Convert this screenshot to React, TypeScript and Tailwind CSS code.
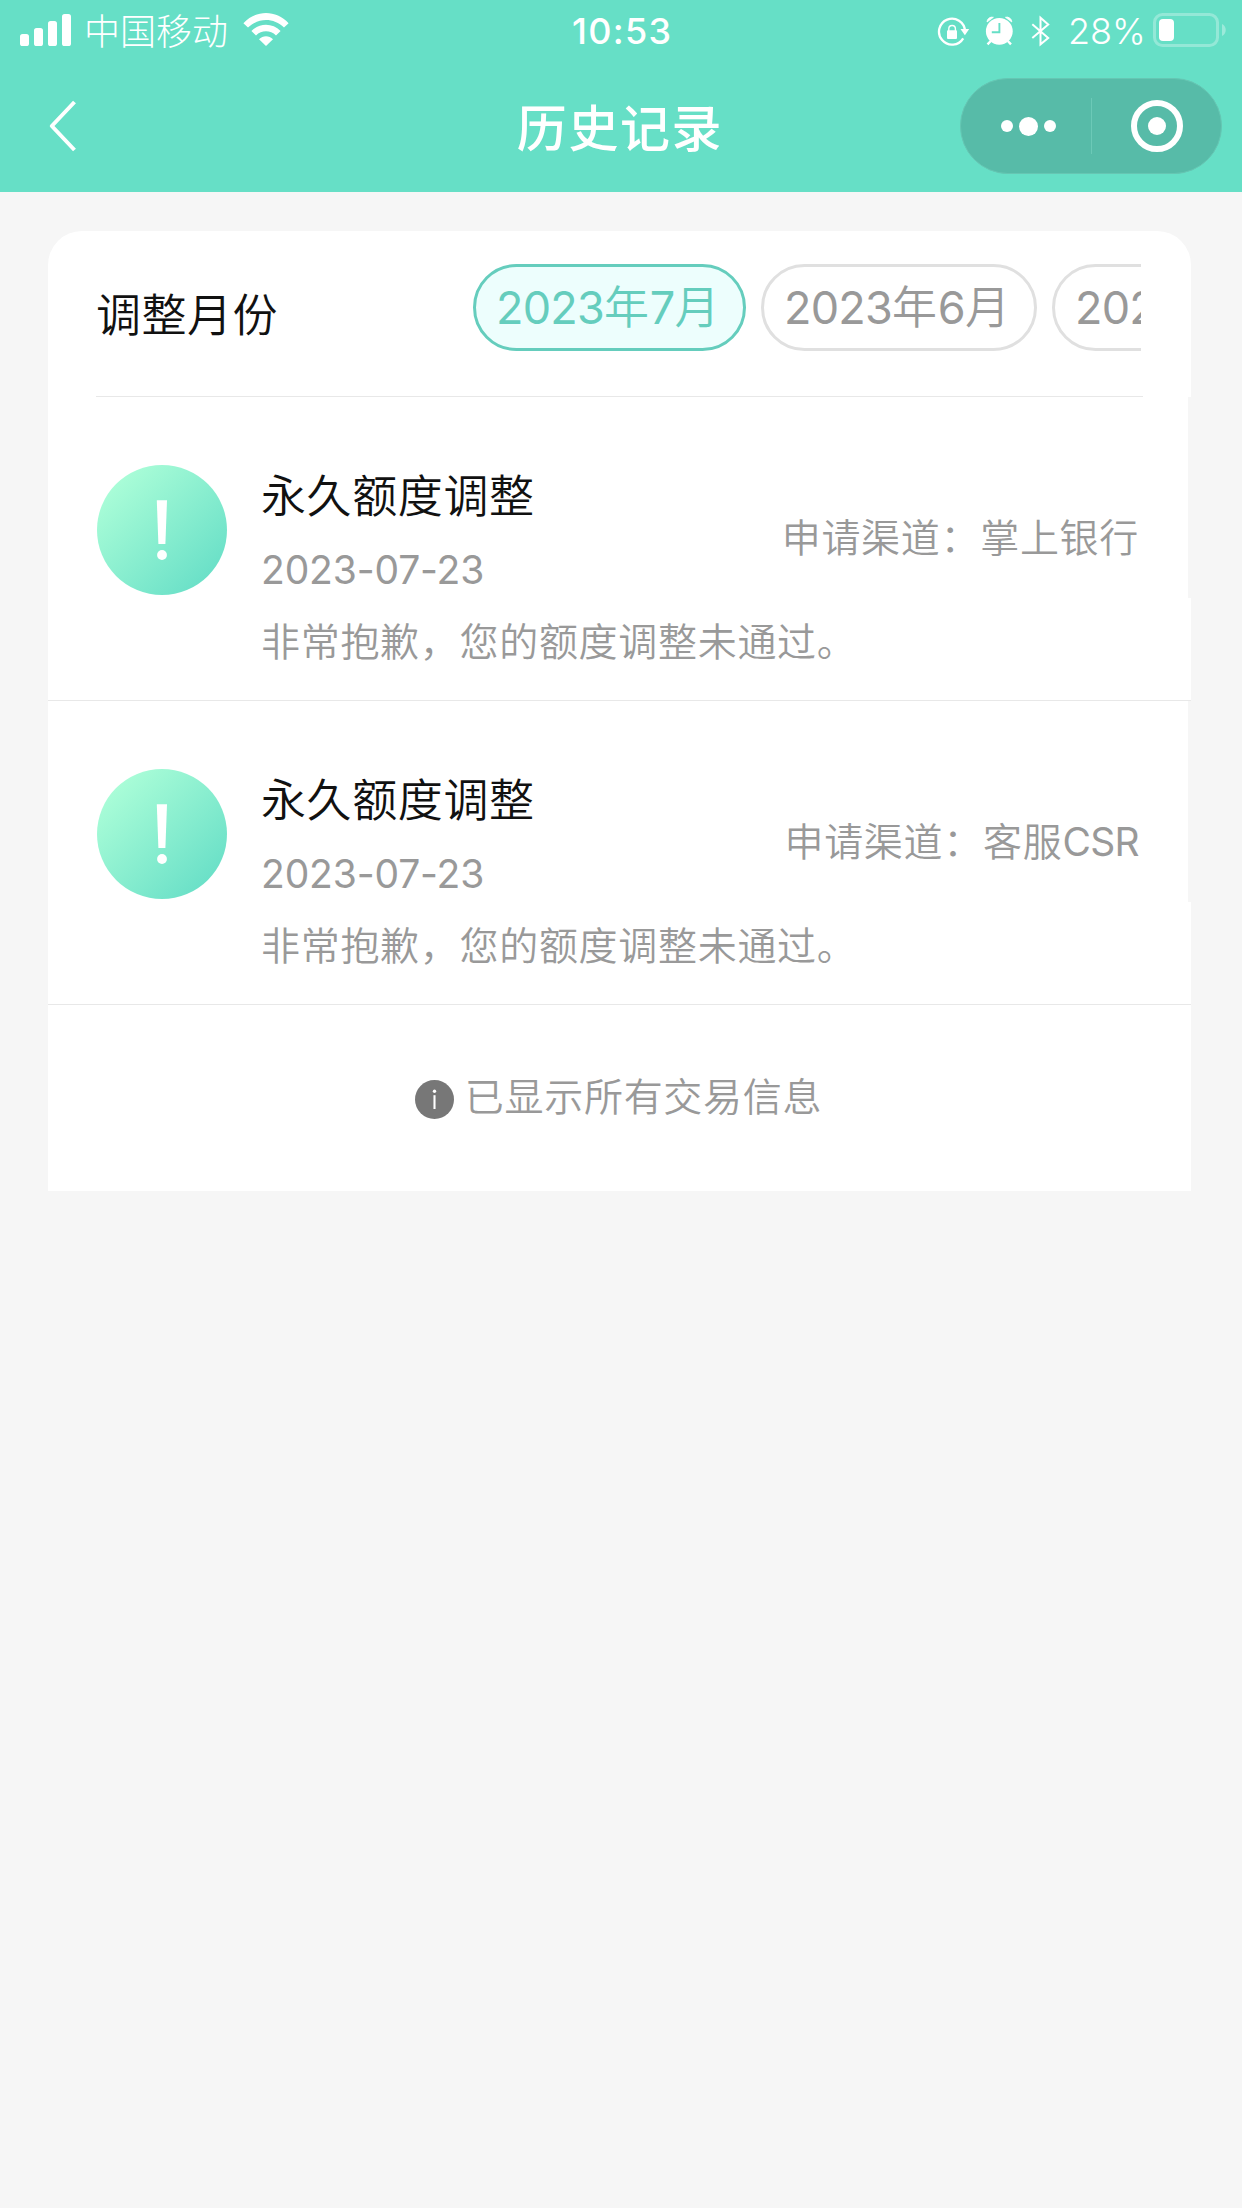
import React from "react";

const records = [
  { title: "永久额度调整", date: "2023-07-23", channel: "申请渠道：掌上银行", message: "非常抱歉，您的额度调整未通过。" },
  { title: "永久额度调整", date: "2023-07-23", channel: "申请渠道：客服CSR", message: "非常抱歉，您的额度调整未通过。" },
];

const months = ["2023年7月", "2023年6月", "2023年5月"];

/** Sets Latin letters and digits tighter than the Chinese text around them. */
function Mixed({ text }: { text: string }) {
  return (
    <>
      {text.split(/([0-9A-Z]+)/).map((run, i) =>
        i % 2 ? (
          <span key={i} className="font-normal tracking-[-0.017em]">
            {run}
          </span>
        ) : (
          run
        ),
      )}
    </>
  );
}

function Signal() {
  return (
    <svg className="ml-5 mt-3.5 h-8 w-[51px] shrink-0" viewBox="0 0 51 32" fill="#fff">
      <rect x="0" y="20" width="9" height="12" rx="2.6" />
      <rect x="14" y="14" width="9" height="18" rx="2.6" />
      <rect x="28" y="7" width="9" height="25" rx="2.6" />
      <rect x="42" y="0" width="9" height="32" rx="2.6" />
    </svg>
  );
}

function Wifi() {
  return (
    <svg className="ml-[15px] mt-[13px] h-[33px] w-[46px] shrink-0" viewBox="0 0 46 33" fill="#fff">
      <path d="M0.4 10.2 C13 -3.3 33 -3.3 45.6 10.2 L41 14.6 C31 4.6 15 4.6 5 14.6 Z" />
      <path d="M8.4 18 C16.5 9.8 29.5 9.8 37.6 18 L33 22.4 C27.5 17 18.5 17 13 22.4 Z" />
      <path d="M16 26.2 C20 22.3 26 22.3 30 26.2 L23 33 Z" />
    </svg>
  );
}

function StatusIcons() {
  return (
    <svg className="mt-[15px] h-8 w-[114px] shrink-0" viewBox="937 15 114 32">
      <g fill="none" stroke="#fff" strokeWidth="2.3">
        <path d="M963.2 38.3 A13 13 0 1 1 965 31" />
        <path d="M948.8 31 V28.8 A3.3 3.3 0 0 1 955.4 28.8 V31" strokeWidth="1.4" />
      </g>
      <rect x="947" y="30.2" width="10" height="8.8" rx="1" fill="#fff" />
      <path d="M960.5 29 H969.2 L964.9 35.2 Z" fill="#fff" />
      <circle cx="999.3" cy="31.3" r="13.4" fill="#fff" />
      <path d="M987 22 A5 5 0 0 1 993.4 17.3 Z M1011.8 22 A5 5 0 0 0 1005.4 17.3 Z" fill="#fff" stroke="#fff" strokeWidth="0.8" strokeLinejoin="round" />
      <path d="M990.8 41 L987.5 44.3 M1007.8 41 L1011 44.3" stroke="#fff" strokeWidth="2.4" />
      <path d="M999.4 23 V32.3 H991.8" fill="none" stroke="#66dfc6" strokeWidth="1.9" />
      <path d="M1032.3 24.3 L1048.2 38 L1040.5 44.3 V17.8 L1048.2 24.6 L1032.3 38" fill="none" stroke="#fff" strokeWidth="2" strokeLinejoin="miter" />
    </svg>
  );
}

function Battery() {
  return (
    <svg className="mt-[13px] h-[34px] w-[74px] shrink-0" viewBox="0 0 74 34">
      <rect x="1.5" y="1.5" width="63" height="31" rx="8" fill="none" stroke="#fff" strokeOpacity=".3" strokeWidth="3" />
      <path d="M69 11 C74 13 74 21 69 23 Z" fill="#fff" fillOpacity=".35" />
      <rect x="6" y="6" width="15" height="22" rx="4" fill="#fff" />
    </svg>
  );
}

function Header() {
  return (
    <header className="h-48 bg-[#66dfc6] text-white">
      <div className="grid h-[62px] grid-cols-[572px_101px_1fr]">
        <div className="flex">
          <Signal />
          <span className="ml-[13px] text-[36px] font-light leading-[65px]">中国移动</span>
          <Wifi />
        </div>
        <span className="text-[36px] font-medium leading-[63px] tracking-[1.3px]">10:53</span>
        <div className="flex justify-end pr-[15px]">
          <StatusIcons />
          <span className="ml-[17px] w-[85px] whitespace-nowrap text-[36px] font-light leading-[63px]">28%</span>
          <Battery />
        </div>
      </div>
      <div className="grid h-[130px] grid-cols-[420px_400px_1fr]">
        <svg className="ml-12 mt-[38px] h-[52px] w-7" viewBox="0 0 28 52" fill="none" stroke="#fff" strokeWidth="4">
          <path d="M26.5 2 L3.8 26 L26.5 50" strokeLinejoin="round" />
        </svg>
        <h1 className="whitespace-nowrap text-center text-[50px] font-medium leading-[134px] tracking-[1.6px]">历史记录</h1>
        <div className="ml-[140px] mt-4 flex h-[96px] w-[262px] items-center rounded-full border border-[#66c6b3] bg-[#57bba8]">
          <div className="flex w-[130px] items-center justify-center gap-[6px] pl-[5px]">
            <i className="size-3 rounded-full bg-white" />
            <i className="size-[19px] rounded-full bg-white" />
            <i className="size-3 rounded-full bg-white" />
          </div>
          <div className="h-14 w-px bg-[#6cc9b7]" />
          <div className="ml-[39px] flex size-[52px] items-center justify-center rounded-full border-6 border-white">
            <i className="size-[18px] rounded-full bg-white" />
          </div>
        </div>
      </div>
    </header>
  );
}

function AlertIcon() {
  return (
    <svg className="size-[130px]" viewBox="0 0 130 130">
      <defs>
        <linearGradient id="mint" x1="0.1" y1="0.12" x2="0.88" y2="0.9">
          <stop offset="0" stopColor="#acfed8" />
          <stop offset="1" stopColor="#68dfc7" />
        </linearGradient>
      </defs>
      <circle cx="65" cy="65" r="65" fill="url(#mint)" />
      <path d="M59.8 35.3 H70 L68.4 79 H61.4 Z" fill="#fff" />
      <circle cx="65" cy="90" r="4.9" fill="#fff" />
    </svg>
  );
}

function Record({ title, date, channel, message }: (typeof records)[number]) {
  return (
    <article className="flex h-[304px] flex-col border-b border-[#e8e8e8]">
      <div className="flex h-[201px] w-[1140px] bg-white pl-[49px]">
        <div className="mt-[68px] w-[164px]">
          <AlertIcon />
        </div>
        <div className="mt-[67px] flex flex-1 flex-col whitespace-nowrap">
          <h2 className="text-[45px] leading-[66px] tracking-[0.6px] text-[#111]">{title}</h2>
          <p className="mt-[7px] text-[39px] font-normal leading-[66px] tracking-[-0.15px] text-[#999]">{date}</p>
        </div>
        <p className="mr-[49px] mt-[111px] whitespace-nowrap text-[39px] leading-[60px] tracking-[0.7px] text-[#999]">
          <Mixed text={channel} />
        </p>
      </div>
      <div className="flex-1 bg-white pl-[213px] pt-[13px]">
        <p className="whitespace-nowrap text-[39px] leading-[62px] tracking-[0.7px] text-[#999]">{message}</p>
      </div>
    </article>
  );
}

export default function App() {
  return (
    <div className="h-[2208px] w-[1242px] overflow-hidden bg-[#f6f6f6] font-['Inter','Noto_Sans_CJK_SC',sans-serif] font-[350]">
      <Header />
      <main className="ml-12 mt-[39px] w-[1143px]">
        <section className="rounded-t-[34px] bg-white px-12">
          <div className="flex h-[166px] border-b border-[#e8e8e8]">
            <h2 className="w-[377px] pt-[51px] text-[45px] leading-[68px] tracking-[0.5px] text-[#111]">调整月份</h2>
            <div className="flex w-[668px] gap-[15px] overflow-hidden pt-[33px]">
              {months.map((m, i) => (
                <button
                  key={m}
                  className={
                    i === 0
                      ? "h-[87px] w-[273px] shrink-0 whitespace-nowrap rounded-full border-3 border-[#65cdbd] bg-[#edfefd] pl-5 text-left text-[45px] leading-[82px] tracking-[0.8px] text-[#65cdbd]"
                      : "h-[87px] w-[276px] shrink-0 whitespace-nowrap rounded-full border-3 border-[#e0e0e0] bg-white pl-5 text-left text-[45px] leading-[82px] tracking-[0.8px] text-[#999]"
                  }
                >
                  <Mixed text={m} />
                </button>
              ))}
            </div>
          </div>
        </section>
        {records.map((r, i) => (
          <Record key={i} {...r} />
        ))}
        <footer className="flex h-[186px] justify-center bg-white pr-[2px] pt-[61px]">
          <svg className="mr-[11px] mt-[14px] size-[39px]" viewBox="0 0 39 39">
            <circle cx="19.5" cy="19.5" r="19.5" fill="#777" />
            <path d="M19.5 15.2 V29" stroke="#fff" strokeWidth="2.1" />
            <circle cx="19.5" cy="11.3" r="1.7" fill="#fff" />
          </svg>
          <p className="text-[39px] leading-[62px] tracking-[0.7px] text-[#999]">已显示所有交易信息</p>
        </footer>
      </main>
    </div>
  );
}
